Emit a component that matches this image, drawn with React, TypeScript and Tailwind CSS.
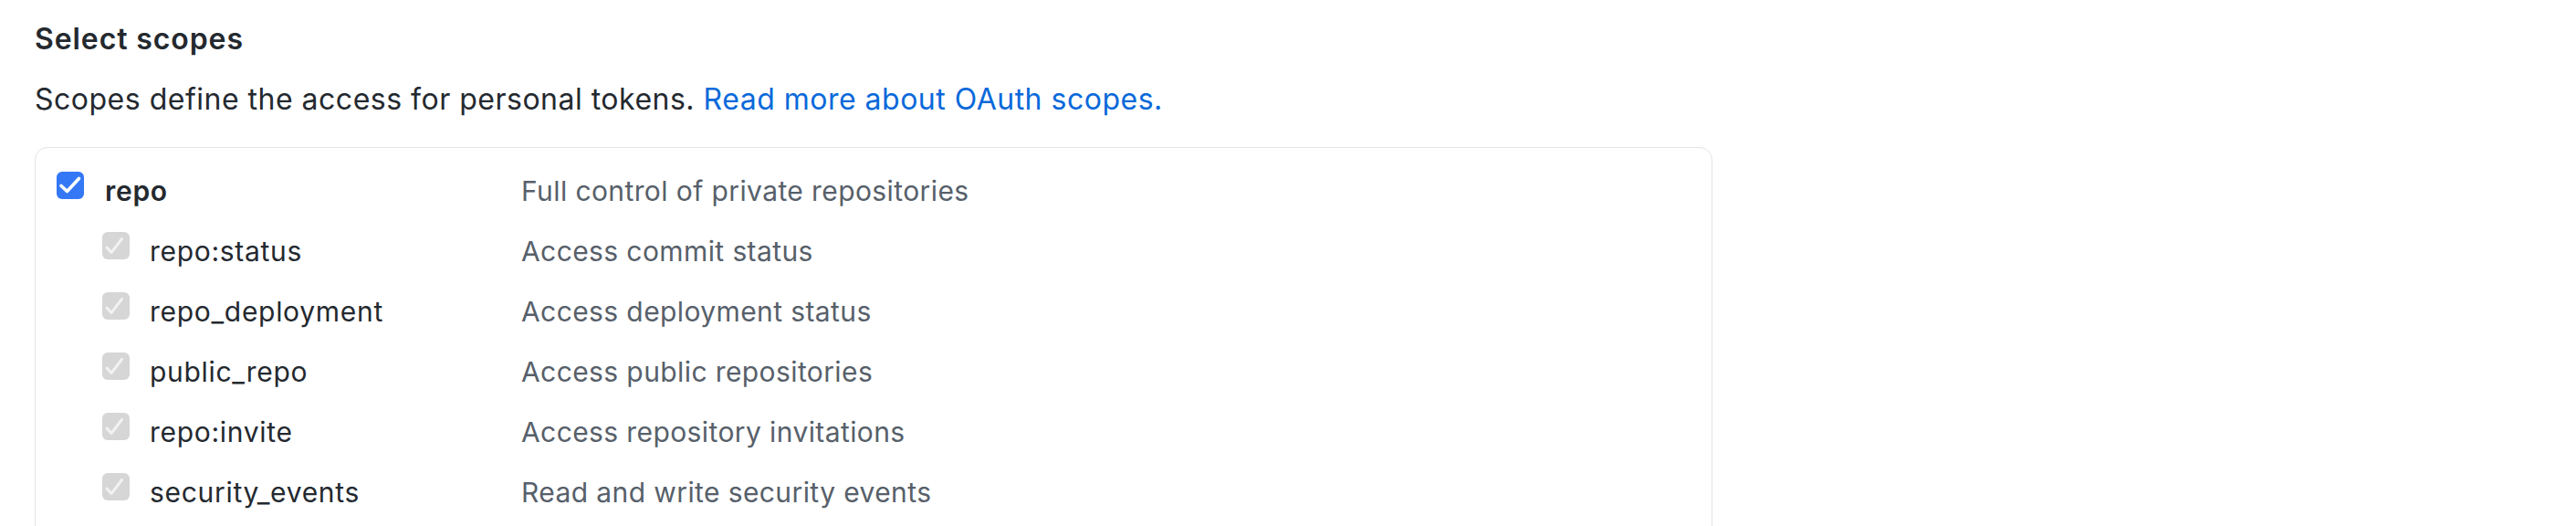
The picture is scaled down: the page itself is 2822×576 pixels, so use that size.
const scopes = [
  { name: 'repo:status', desc: 'Access commit status' },
  { name: 'repo_deployment', desc: 'Access deployment status' },
  { name: 'public_repo', desc: 'Access public repositories' },
  { name: 'repo:invite', desc: 'Access repository invitations' },
  { name: 'security_events', desc: 'Read and write security events' },
]

function BlueCheck() {
  return (
    <span className="flex h-[30px] w-[30px] shrink-0 items-center justify-center rounded-[6px] bg-[#3478f6]">
      <svg viewBox="0 0 30 30" className="h-[30px] w-[30px]">
        <path d="M5 15.5 L11.5 21.5 L24.5 7.5" fill="none" stroke="#ffffff" strokeWidth="3.6" strokeLinecap="round" strokeLinejoin="round" />
      </svg>
    </span>
  )
}

function GrayCheck() {
  return (
    <span className="flex h-[30px] w-[30px] shrink-0 items-center justify-center rounded-[6px] bg-[#d6d6d6]">
      <svg viewBox="0 0 30 30" className="h-[30px] w-[30px]">
        <path d="M5 17 L10 22.5 L21.5 7.5" fill="none" stroke="#f2f2f2" strokeWidth="3" strokeLinecap="round" strokeLinejoin="round" />
      </svg>
    </span>
  )
}

export default function App() {
  return (
    <div className="h-[576px] w-full overflow-hidden bg-white pl-[38px] pt-[20px] font-['Inter','Liberation_Sans',sans-serif] text-[30px] leading-[45px] text-[#24292f]">
      <h3 className="text-[32px] font-semibold tracking-[0.9px]">Select scopes</h3>
      <p className="mt-[21px] text-[32px] tracking-[0.5px]">
        Scopes define the access for personal tokens.{' '}
        <a className="text-[#0969da]">Read more about OAuth scopes.</a>
      </p>

      <div className="mt-[30px] h-[500px] w-[1838px] rounded-[14px] border border-[#e1e4e8] pl-[23px] pt-[16px]">
        {/* parent scope */}
        <div className="flex h-[66px]">
          <div className="flex w-[509px] shrink-0">
            <div className="mt-[10px]">
              <BlueCheck />
            </div>
            <span className="ml-[23px] mt-[9px] font-semibold tracking-[0.7px]">repo</span>
          </div>
          <span className="mt-[9px] tracking-[0.4px] text-[#57606a]">Full control of private repositories</span>
        </div>

        {scopes.map((s) => (
          <div key={s.name} className="flex h-[66px]">
            <div className="flex w-[509px] shrink-0 pl-[50px]">
              <div className="mt-[10px]">
                <GrayCheck />
              </div>
              <span className="ml-[22px] mt-[9px] tracking-[0.7px]">{s.name}</span>
            </div>
            <span className="mt-[9px] tracking-[0.4px] text-[#57606a]">{s.desc}</span>
          </div>
        ))}
      </div>
    </div>
  )
}
